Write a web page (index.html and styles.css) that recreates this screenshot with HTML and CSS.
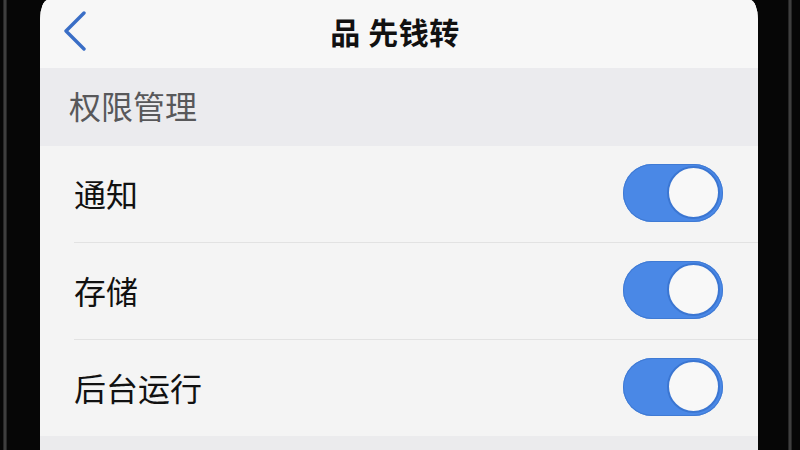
FILE: index.html
```html
<!DOCTYPE html>
<html lang="zh-CN">
<head>
<meta charset="utf-8">
<title>权限管理</title>
<link rel="stylesheet" href="styles.css">
</head>
<body>
<div class="device">
  <div class="bezel bezel-left"><div class="edge"></div></div>
  <div class="screen">
    <div class="nav">
      <div class="back">
        <svg width="26" height="40" viewBox="0 0 26 40"><path d="M22 2 L4 20 L22 38" fill="none" stroke="#3a6ec6" stroke-width="3.4" stroke-linecap="round" stroke-linejoin="round"/></svg>
      </div>
      <div class="title">品 先钱转</div>
      <div class="nav-spacer"></div>
    </div>
    <div class="section-header">权限管理</div>
    <div class="list">
      <div class="row">
        <span class="label">通知</span>
        <div class="toggle"><div class="knob"></div></div>
      </div>
      <div class="row">
        <span class="label">存储</span>
        <div class="toggle"><div class="knob"></div></div>
      </div>
      <div class="row last">
        <span class="label">后台运行</span>
        <div class="toggle"><div class="knob"></div></div>
      </div>
    </div>
    <div class="footer"></div>
  </div>
  <div class="bezel bezel-right"><div class="edge"></div></div>
</div>
</body>
</html>
```
FILE: styles.css
```css
html, body {
  margin: 0;
  padding: 0;
  width: 800px;
  height: 450px;
  overflow: hidden;
  background: #050505;
  font-family: "Noto Sans CJK SC", "Noto Sans", sans-serif;
}

.device {
  display: flex;
  width: 800px;
  height: 450px;
}

.bezel {
  background: #060606;
  display: flex;
}

.bezel-left {
  width: 40px;
  justify-content: flex-start;
  padding-left: 3px;
  box-sizing: border-box;
}

.bezel-right {
  width: 42px;
  justify-content: flex-end;
  padding-right: 8px;
  box-sizing: border-box;
}

.edge {
  width: 4px;
  height: 100%;
  background: linear-gradient(90deg, #1a1a1a, #4a4a4a, #1a1a1a);
}

.screen {
  width: 718px;
  display: flex;
  flex-direction: column;
  background: #f4f4f4;
  border-top-left-radius: 8px 20px;
  border-top-right-radius: 8px 20px;
  overflow: hidden;
}

.nav {
  height: 68px;
  flex: none;
  background: #f7f7f7;
  display: flex;
  align-items: center;
  padding: 0 0 6px 22px;
  box-sizing: border-box;
}

.back {
  width: 26px;
  height: 40px;
  display: flex;
}

.title {
  flex: 1;
  text-align: center;
  font-size: 30px;
  font-weight: 700;
  color: #111;
  padding-right: 30px;
  letter-spacing: 0.5px;
}

.nav-spacer {
  width: 26px;
}

.section-header {
  height: 78px;
  flex: none;
  background: #ebebee;
  display: flex;
  align-items: center;
  padding: 0 0 0 29px;
  font-size: 32px;
  color: #58585a;
  box-sizing: border-box;
  padding-bottom: 4px;
}

.list {
  display: flex;
  flex-direction: column;
  background: #f4f4f4;
}

.row {
  height: 97px;
  display: flex;
  align-items: center;
  justify-content: space-between;
  margin-left: 34px;
  padding-right: 35px;
  border-bottom: 1.5px solid #e2e2e2;
  box-sizing: border-box;
}

.row.last {
  height: 96px;
  border-bottom: none;
}

.label {
  font-size: 32px;
  color: #111;
  padding-top: 0;
  margin-top: -2px;
}

.toggle {
  width: 100px;
  height: 58px;
  border-radius: 29px;
  background: #4a88e6;
  display: flex;
  align-items: center;
  justify-content: flex-end;
  padding: 0 3px;
  box-sizing: border-box;
  box-shadow: inset 0 0 0 1px #3f7ad4;
  margin-top: -3px;
}

.knob {
  width: 53px;
  height: 53px;
  border-radius: 50%;
  background: #f8f8f8;
  border: 2px solid #3b76d2;
  box-sizing: border-box;
}

.footer {
  flex: 1;
  background: #ebebed;
}
```
